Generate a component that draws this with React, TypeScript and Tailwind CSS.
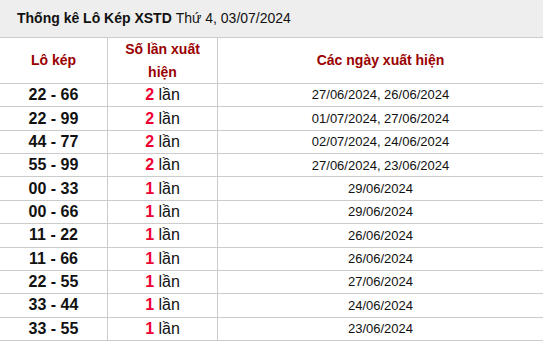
import React from "react";

const rows: [string, number, string][] = [
  ["22 - 66", 2, "27/06/2024, 26/06/2024"],
  ["22 - 99", 2, "01/07/2024, 27/06/2024"],
  ["44 - 77", 2, "02/07/2024, 24/06/2024"],
  ["55 - 99", 2, "27/06/2024, 23/06/2024"],
  ["00 - 33", 1, "29/06/2024"],
  ["00 - 66", 1, "29/06/2024"],
  ["11 - 22", 1, "26/06/2024"],
  ["11 - 66", 1, "26/06/2024"],
  ["22 - 55", 1, "27/06/2024"],
  ["33 - 44", 1, "24/06/2024"],
  ["33 - 55", 1, "23/06/2024"],
];

export default function App() {
  return (
    <div
      className="w-[543px] h-[341px] bg-white overflow-hidden text-[#111]"
      style={{ fontFamily: '"Liberation Sans", Arial, sans-serif' }}
    >
      <div className="h-[38px] bg-[#eeeeee] border-b border-[#cccccc] flex items-center pl-[17px] text-[14px]">
        <span className="font-bold">Thống kê Lô Kép XSTD</span>
        <span>&nbsp;Thứ 4, 03/07/2024</span>
      </div>
      <div className="flex h-[46px] border-b border-[#cccccc] text-[14px] font-bold text-[#990000]">
        <div className="w-[108px] border-r border-[#cccccc] flex items-center justify-center">Lô kép</div>
        <div className="w-[110px] border-r border-[#cccccc] flex items-center justify-center text-center leading-[23px] px-[10px]">
          Số lần xuất hiện
        </div>
        <div className="flex-1 flex items-center justify-center">Các ngày xuất hiện</div>
      </div>
      {rows.map(([pair, n, dates]) => (
        <div key={pair} className="flex h-[23.36px] border-b border-[#cccccc]">
          <div className="w-[108px] border-r border-[#cccccc] flex items-center justify-center text-[16px] font-bold">
            {pair}
          </div>
          <div className="w-[110px] border-r border-[#cccccc] flex items-center justify-center text-[16px]">
            <span className="font-bold text-[#ee0033]">{n}</span>
            <span>&nbsp;lần</span>
          </div>
          <div className="flex-1 flex items-center justify-center text-[13px]">{dates}</div>
        </div>
      ))}
    </div>
  );
}
